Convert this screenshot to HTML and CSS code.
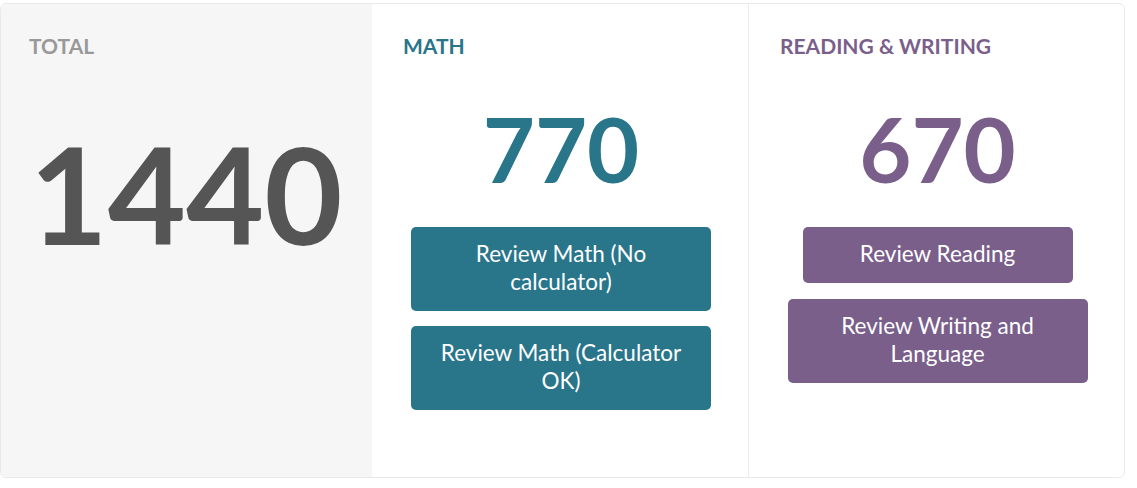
FILE: index.html
```html
<!DOCTYPE html>
<html lang="en">
<head>
<meta charset="utf-8">
<title>Scores</title>
<link rel="stylesheet" href="styles.css">
</head>
<body>
<div class="card">
  <section class="col col-total">
    <h2 class="label label-total">TOTAL</h2>
    <div class="score score-total">1440</div>
  </section>
  <section class="col col-math">
    <h2 class="label label-math">MATH</h2>
    <div class="score score-math">770</div>
    <div class="actions">
      <a class="btn btn-math">Review Math (No calculator)</a>
      <a class="btn btn-math">Review Math (Calculator OK)</a>
    </div>
  </section>
  <section class="col col-rw">
    <h2 class="label label-rw">READING &amp; WRITING</h2>
    <div class="score score-rw">670</div>
    <div class="actions">
      <a class="btn btn-rw btn-narrow">Review Reading</a>
      <a class="btn btn-rw">Review Writing and Language</a>
    </div>
  </section>
</div>
</body>
</html>
```
FILE: styles.css
```css
* { box-sizing: border-box; }
html, body { margin: 0; padding: 0; background: #fff; }
body { font-family: Lato, "Noto Sans", sans-serif; }

.card {
  margin: 3px 12px 0 0;
  height: 475px;
  display: flex;
  border: 1px solid #e9e9e9;
  border-radius: 6px;
  overflow: hidden;
}

.col {
  padding: 30px 29px 0 31px;
}
.col-total {
  width: 371px;
  padding-left: 28px;
  background: #f6f6f6;
}
.col-math {
  width: 377px;
  border-right: 1px solid #ececec;
}
.col-rw {
  flex: 1;
}

.label {
  margin: 0;
  font-size: 21px;
  line-height: 24px;
  font-weight: 700;
}
.label-total { color: #999999; }
.label-math { color: #29758a; }
.label-rw { color: #7a5f8b; }

.score {
  text-align: center;
  font-weight: 700;
  line-height: 1;
}
.score-total {
  margin-top: 68px;
  font-size: 135px;
  color: #555555;
}
.score-math, .score-rw {
  margin-top: 45px;
  font-size: 90px;
}
.score-math { color: #29758a; }
.score-rw { color: #7a5f8b; }

.actions {
  margin-top: 34px;
  display: flex;
  flex-direction: column;
  align-items: center;
  gap: 15px;
}
.btn {
  display: block;
  width: 300px;
  padding: 13px 20px 15px;
  border-radius: 5px;
  color: #ffffff;
  text-align: center;
  font-size: 22.5px;
  line-height: 28px;
  cursor: pointer;
}
.btn-math { background: #29758a; }
.btn-rw { background: #7a5f8b; }
.btn-narrow { width: 270px; margin-bottom: 1px; }
```
